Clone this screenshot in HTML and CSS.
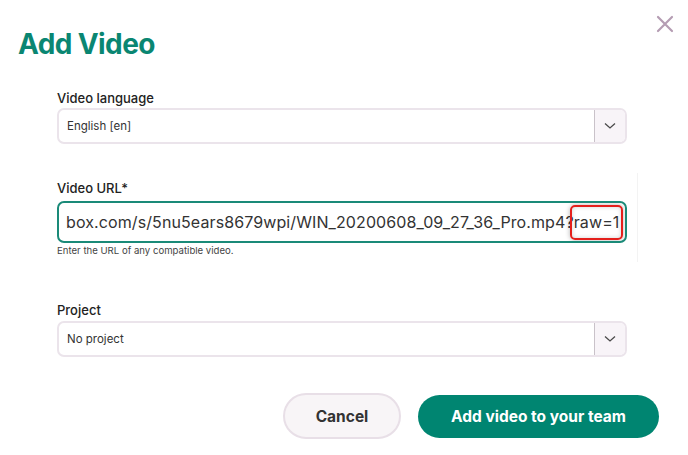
FILE: index.html
```html
<!DOCTYPE html>
<html lang="en">
<head>
<meta charset="utf-8">
<title>Add Video</title>
<link rel="stylesheet" href="styles.css">
</head>
<body>
<div class="modal">
  <header class="head">
    <h1 class="title">Add Video</h1>
    <button class="close" aria-label="Close">
      <svg width="18" height="18" viewBox="0 0 18 18"><path d="M2 2 L16 16 M16 2 L2 16" stroke="#b59db3" stroke-width="2.2" stroke-linecap="round" fill="none"/></svg>
    </button>
  </header>
  <div class="form">
    <div class="field lang">
      <label class="label">Video language</label>
      <div class="select">
        <span class="value">English [en]</span>
        <span class="arrow"><svg width="12" height="8" viewBox="0 0 12 8"><path d="M1 1.5 L6 6 L11 1.5" stroke="#4a4a4a" stroke-width="1.3" fill="none"/></svg></span>
      </div>
    </div>
    <div class="field url">
      <label class="label">Video URL*</label>
      <div class="input"><span class="url-text">box.com/s/5nu5ears8679wpi/WIN_20200608_09_27_36_Pro.mp4?<span class="hl">raw=1</span></span></div>
      <p class="help">Enter the URL of any compatible video.</p>
    </div>
    <div class="field project">
      <label class="label">Project</label>
      <div class="select">
        <span class="value">No project</span>
        <span class="arrow"><svg width="12" height="8" viewBox="0 0 12 8"><path d="M1 1.5 L6 6 L11 1.5" stroke="#4a4a4a" stroke-width="1.3" fill="none"/></svg></span>
      </div>
    </div>
  </div>
  <div class="actions">
    <button class="btn cancel">Cancel</button>
    <button class="btn primary">Add video to your team</button>
  </div>
</div>
</body>
</html>
```
FILE: styles.css
```css
* { box-sizing: border-box; }
html, body { margin: 0; padding: 0; background: #fff; }
body { font-family: Inter, "Noto Sans", sans-serif; color: #2b2b2b; }

.modal { width: 688px; height: 455px; }

.head {
  display: flex;
  justify-content: space-between;
  align-items: flex-start;
  padding: 0 14px 0 18px;
}
.title {
  margin: 26px 0 0;
  font-size: 28px;
  line-height: 36px;
  font-weight: 700;
  color: #0a8672;
  letter-spacing: -0.6px;
}
.close {
  margin-top: 15px;
  width: 18px;
  height: 18px;
  padding: 0;
  border: 0;
  background: none;
  display: flex;
}

.form {
  margin-left: 57px;
  width: 570px;
}
.field { display: flex; flex-direction: column; }
.label {
  font-size: 13px;
  line-height: 16px;
  font-weight: 500;
  color: #222;
}
.lang { margin-top: 28px; }
.lang .label { margin-bottom: 2px; }

.select {
  display: flex;
  height: 36px;
  border: 2px solid #ebe4eb;
  border-radius: 7px;
  background: #fff;
  overflow: hidden;
}
.select .value {
  flex: 1;
  display: flex;
  align-items: center;
  padding-left: 8px;
  font-size: 11.5px;
  color: #333;
}
.select .arrow {
  width: 31px;
  display: flex;
  align-items: center;
  justify-content: center;
  background: #f8f4f8;
  border-left: 1px solid #c9c2c9;
}

.url {
  margin-top: 29px;
  margin-right: -11px;
  padding: 7px 10px 6px 0;
  border-right: 1px solid #f3f3f3;
}
.url .label { margin-bottom: 5px; }
.input {
  height: 42px;
  border: 2px solid #1a8a78;
  border-radius: 7px;
  display: flex;
  align-items: center;
  padding-left: 7px;
  overflow: hidden;
  white-space: nowrap;
}
.url-text {
  font-size: 16px;
  color: #333;
  letter-spacing: 0.1px;
}
.hl { position: relative; }
.hl::after {
  content: "";
  position: absolute;
  left: -4px;
  right: -4px;
  top: -7px;
  bottom: -8px;
  border: 2px solid #e4201c;
  border-radius: 5px;
  box-shadow: 0 0 5px rgba(0,0,0,0.3), inset 0 0 4px rgba(0,0,0,0.18);
}
.help {
  margin: 2px 0 0;
  font-size: 9.6px;
  line-height: 11px;
  color: #444;
}

.project { margin-top: 40px; }
.project .label { margin-bottom: 3px; }

.actions {
  display: flex;
  justify-content: flex-end;
  align-items: center;
  gap: 17px;
  margin-top: 36px;
  padding-right: 29px;
}
.btn {
  font-family: Inter, "Noto Sans", sans-serif;
  font-size: 15.5px;
  font-weight: 700;
  border-radius: 999px;
  cursor: pointer;
}
.cancel {
  width: 118px;
  height: 46px;
  background: #f8f5f7;
  border: 2px solid #e8dfe7;
  color: #333;
}
.primary {
  width: 241px;
  height: 43px;
  background: #008571;
  border: 0;
  color: #fff;
}
```
